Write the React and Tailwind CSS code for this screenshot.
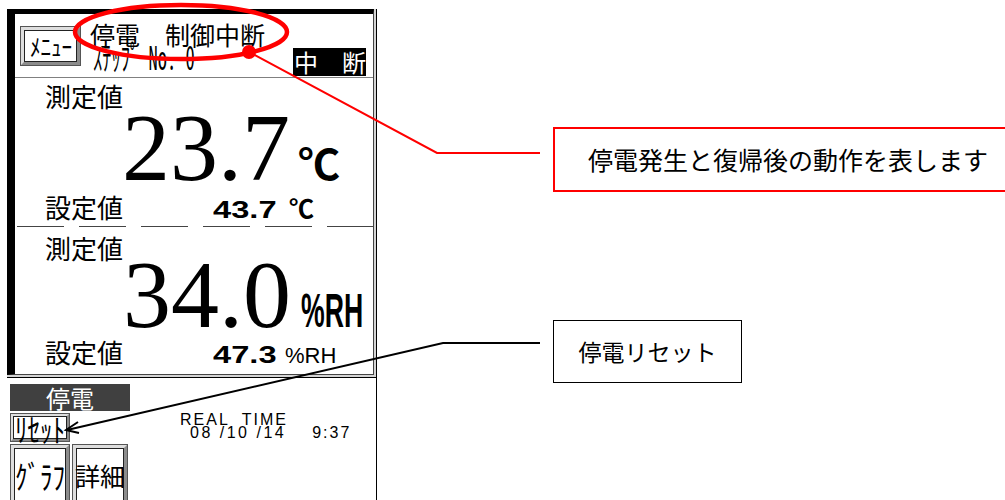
const jp = "font-['Noto_Sans_CJK_JP',sans-serif]";
const mono = "font-['Noto_Sans_Mono_CJK_JP','Noto_Sans_CJK_JP',monospace]";
const serif = "font-['Liberation_Serif',serif]";
const sans = "font-['Liberation_Sans',Arial,sans-serif]";

function Bevel({ className, bevel, children }) {
  return (
    <div className={`border border-[#555] ${className}`}>
      <div className={`w-full h-full ${bevel} border-t-[#dedede] border-l-[#dedede] border-r-[#8c8c8c] border-b-[#8c8c8c] bg-[#bdbdbd]`}>
        <div className="w-full h-full border border-[#222] bg-white flex items-center justify-center overflow-visible">
          {children}
        </div>
      </div>
    </div>
  );
}

function Dashes() {
  const segs = [0, 1, 2, 3, 4, 5];
  return (
    <div className="h-px flex gap-[15px] pl-[2px] overflow-hidden shrink-0">
      {segs.map((i) => (
        <div key={i} className="w-[47px] h-px bg-[#444] shrink-0" />
      ))}
    </div>
  );
}

export default function App() {
  return (
    <div className={`relative w-[1005px] h-[500px] bg-white overflow-hidden text-black ${jp}`}>
      {/* Device */}
      <div className="ml-[7px] pt-[9px] w-[370px]">
        {/* Top frame */}
        <div className="border-r border-b border-black">
          <div className="border-r-2 border-b-2 border-[#d4d4d4]">
            <div className="border-t-[5px] border-l-[8px] border-t-black border-l-black border-r border-b border-r-[#444] border-b-[#444] bg-white h-[366px] flex flex-col">
              {/* Header */}
              <div className="h-[63px] flex shrink-0">
                <Bevel className="ml-[5px] mt-[12px] w-[61px] h-[40px] shrink-0" bevel="border-[3px]">
                  <span className={`${mono} inline-block scale-x-[0.88] text-[24px] leading-none whitespace-nowrap`}>ﾒﾆｭｰ</span>
                </Bevel>
                <div className="ml-[9px] mt-[8px] flex flex-col">
                  <div className="text-[25px] leading-[24px] whitespace-nowrap">停電　制御中断</div>
                  <div className={`${mono} inline-block origin-left scale-x-[0.56] text-[33px] leading-[20px] ml-[3px] whitespace-nowrap`}>ｽﾃｯﾌﾟ No. 0</div>
                </div>
                <div className="ml-auto self-end mb-[1px] mr-[7px] w-[73px] h-[28px] bg-black text-white text-[24px] leading-[28px] pl-[1px] whitespace-nowrap shrink-0">
                  中　断
                </div>
              </div>
              <div className="h-px bg-[#808080] shrink-0" />

              {/* Temperature */}
              <div className="h-[36px] pl-[30px] pt-[5px] text-[26px] leading-none shrink-0">測定値</div>
              <div className="h-[68px] shrink-0">
                <div className="flex items-baseline pl-[107px] -mt-[14px]">
                  <span className={`${serif} text-[96px] leading-none shrink-0`}>23.7</span>
                  <span className="ml-[8px] text-[42px] leading-none font-bold shrink-0">℃</span>
                </div>
              </div>
              <div className="h-[44px] flex items-baseline pl-[30px] pt-[12px] shrink-0">
                <span className="w-[168px] text-[26px] leading-none shrink-0">設定値</span>
                <span className="w-[73px] shrink-0 inline-block">
                  <span className={`${sans} inline-block origin-left scale-x-[1.42] text-[23px] leading-none font-bold`}>43.7</span>
                </span>
                <span className="ml-[3px] text-[25px] leading-none font-bold shrink-0">℃</span>
              </div>
              <Dashes />

              {/* Humidity */}
              <div className="h-[35px] pl-[30px] pt-[8px] text-[26px] leading-none shrink-0">測定値</div>
              <div className="h-[68px] shrink-0">
                <div className="flex items-baseline pl-[108px] -mt-[15px]">
                  <span className={`${serif} text-[96px] leading-none shrink-0`}>34.0</span>
                  <span className={`${sans} ml-[10px] inline-block origin-left scale-x-[0.555] text-[48px] leading-none font-bold shrink-0`}>%RH</span>
                </div>
              </div>
              <div className="h-[44px] flex items-baseline pl-[30px] pt-[9px] shrink-0">
                <span className="w-[168px] text-[26px] leading-none shrink-0">設定値</span>
                <span className="w-[71px] shrink-0 inline-block">
                  <span className={`${sans} inline-block origin-left scale-x-[1.42] text-[23px] leading-none font-bold`}>47.3</span>
                </span>
                <span className={`${sans} ml-[1px] text-[22px] leading-none shrink-0`}>%RH</span>
              </div>
            </div>
          </div>
        </div>

        {/* Bottom section */}
        <div className="border-r border-black h-[123px] pl-[3px] pt-[6px]">
          <div className="w-[120px] h-[27px] bg-[#404040] text-white text-[24px] leading-[27px] text-center">停電</div>
          <div className="flex mt-[2px]">
            <Bevel className="w-[60px] h-[29px] shrink-0" bevel="border-2">
              <span className={`${mono} inline-block scale-x-[0.78] text-[32px] leading-none whitespace-nowrap`}>ﾘｾｯﾄ</span>
            </Bevel>
            <div className={`${sans} ml-[110px] text-[16px] leading-[13px]`}>
              <div className="tracking-[2px] whitespace-pre">REAL  TIME</div>
              <div className="flex pl-[10px] whitespace-pre tracking-[2.5px]">
                <span>08 /10 /14</span>
                <span className="ml-[26px] tracking-[2px]">9:37</span>
              </div>
            </div>
          </div>
          <div className="flex gap-[2px] mt-[2px]">
            <Bevel className="w-[60px] h-[62px] shrink-0" bevel="border-[3px]">
              <span className={`${mono} inline-block scale-x-[0.78] text-[32px] leading-none whitespace-nowrap`}>ｸﾞﾗﾌ</span>
            </Bevel>
            <Bevel className="w-[56px] h-[62px] shrink-0" bevel="border-[3px]">
              <span className="text-[25px] leading-none whitespace-nowrap">詳細</span>
            </Bevel>
          </div>
        </div>
      </div>

      {/* Annotation overlay */}
      <svg className="absolute left-0 top-0 pointer-events-none" width="1005" height="500">
        <ellipse cx="181" cy="32" rx="106" ry="27" fill="none" stroke="#ff0000" strokeWidth="4.5" />
        <circle cx="249" cy="52" r="7" fill="#ff0000" />
        <polyline points="249,52 437,153 540,153" fill="none" stroke="#ff0000" strokeWidth="2" />
        <polyline points="540,343 443,343 67,430" fill="none" stroke="#000" strokeWidth="2" />
        <polyline points="78,422 66,430 79,433" fill="none" stroke="#000" strokeWidth="2" />
      </svg>

      <div className="absolute left-[553px] top-[127px] w-[470px] h-[65px] border-2 border-[#ff0000] bg-white flex items-center justify-center">
        <span className="text-[25px] leading-none whitespace-nowrap">停電発生と復帰後の動作を表します</span>
      </div>
      <div className="absolute left-[553px] top-[320px] w-[189px] h-[63px] border-[1.5px] border-black bg-white flex items-center justify-center">
        <span className="text-[23px] leading-none whitespace-nowrap">停電リセット</span>
      </div>
    </div>
  );
}
